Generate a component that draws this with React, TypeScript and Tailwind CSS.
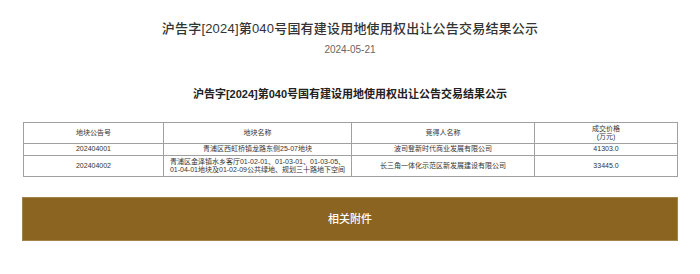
import React from "react";

const font = { fontFamily: '"Liberation Sans", "Noto Sans CJK SC", sans-serif' };

export default function App() {
  return (
    <div
      className="w-[700px] h-[274px] bg-white flex flex-col items-stretch"
      style={font}
    >
      <h1 className="pt-[19px] text-center text-[13px] leading-[20px] font-medium text-[#333] tracking-[0.2px]">
        沪告字[2024]第040号国有建设用地使用权出让公告交易结果公示
      </h1>
      <div className="mt-[4px] text-center text-[10px] leading-[14px] text-[#666]">
        2024-05-21
      </div>
      <h2 className="mt-[29px] text-center text-[11px] leading-[16px] font-bold text-[#222]">
        沪告字[2024]第040号国有建设用地使用权出让公告交易结果公示
      </h2>
      <div className="mt-[20px] px-[23px]">
        <table className="w-[654px] table-fixed border-collapse border border-[#a9a9a9] text-[7px] leading-[8.5px] text-[#333]">
          <colgroup>
            <col className="w-[140px]" />
            <col className="w-[188px]" />
            <col className="w-[183px]" />
            <col className="w-[143px]" />
          </colgroup>
          <tbody>
            <tr className="h-[21px]">
              <td className="border border-[#a0a0a0] text-center p-0">地块公告号</td>
              <td className="border border-[#a0a0a0] text-center p-0">地块名称</td>
              <td className="border border-[#a0a0a0] text-center p-0">竞得人名称</td>
              <td className="border border-[#a0a0a0] text-center p-0">
                成交价格
                <br />
                (万元)
              </td>
            </tr>
            <tr className="h-[12px]">
              <td className="border border-[#a0a0a0] text-center p-0">202404001</td>
              <td className="border border-[#a0a0a0] text-center p-0">青浦区西虹桥镇龙路东侧25-07地块</td>
              <td className="border border-[#a0a0a0] text-center p-0">波司登新时代商业发展有限公司</td>
              <td className="border border-[#a0a0a0] text-center p-0">41303.0</td>
            </tr>
            <tr className="h-[21px]">
              <td className="border border-[#a0a0a0] text-center p-0">202404002</td>
              <td className="border border-[#a0a0a0] text-center p-0 px-[4px]">
                青浦区金泽镇水乡客厅01-02-01、01-03-01、01-03-05、
                <br />
                01-04-01地块及01-02-09公共绿地、规划三十路地下空间
              </td>
              <td className="border border-[#a0a0a0] text-center p-0">长三角一体化示范区新发展建设有限公司</td>
              <td className="border border-[#a0a0a0] text-center p-0">33445.0</td>
            </tr>
          </tbody>
        </table>
      </div>
      <div className="mt-[20px] mx-[22px] h-[44px] bg-[#8b6421] border border-[#a3844a] flex items-center justify-center">
        <span className="text-white text-[11px] font-medium">相关附件</span>
      </div>
    </div>
  );
}
